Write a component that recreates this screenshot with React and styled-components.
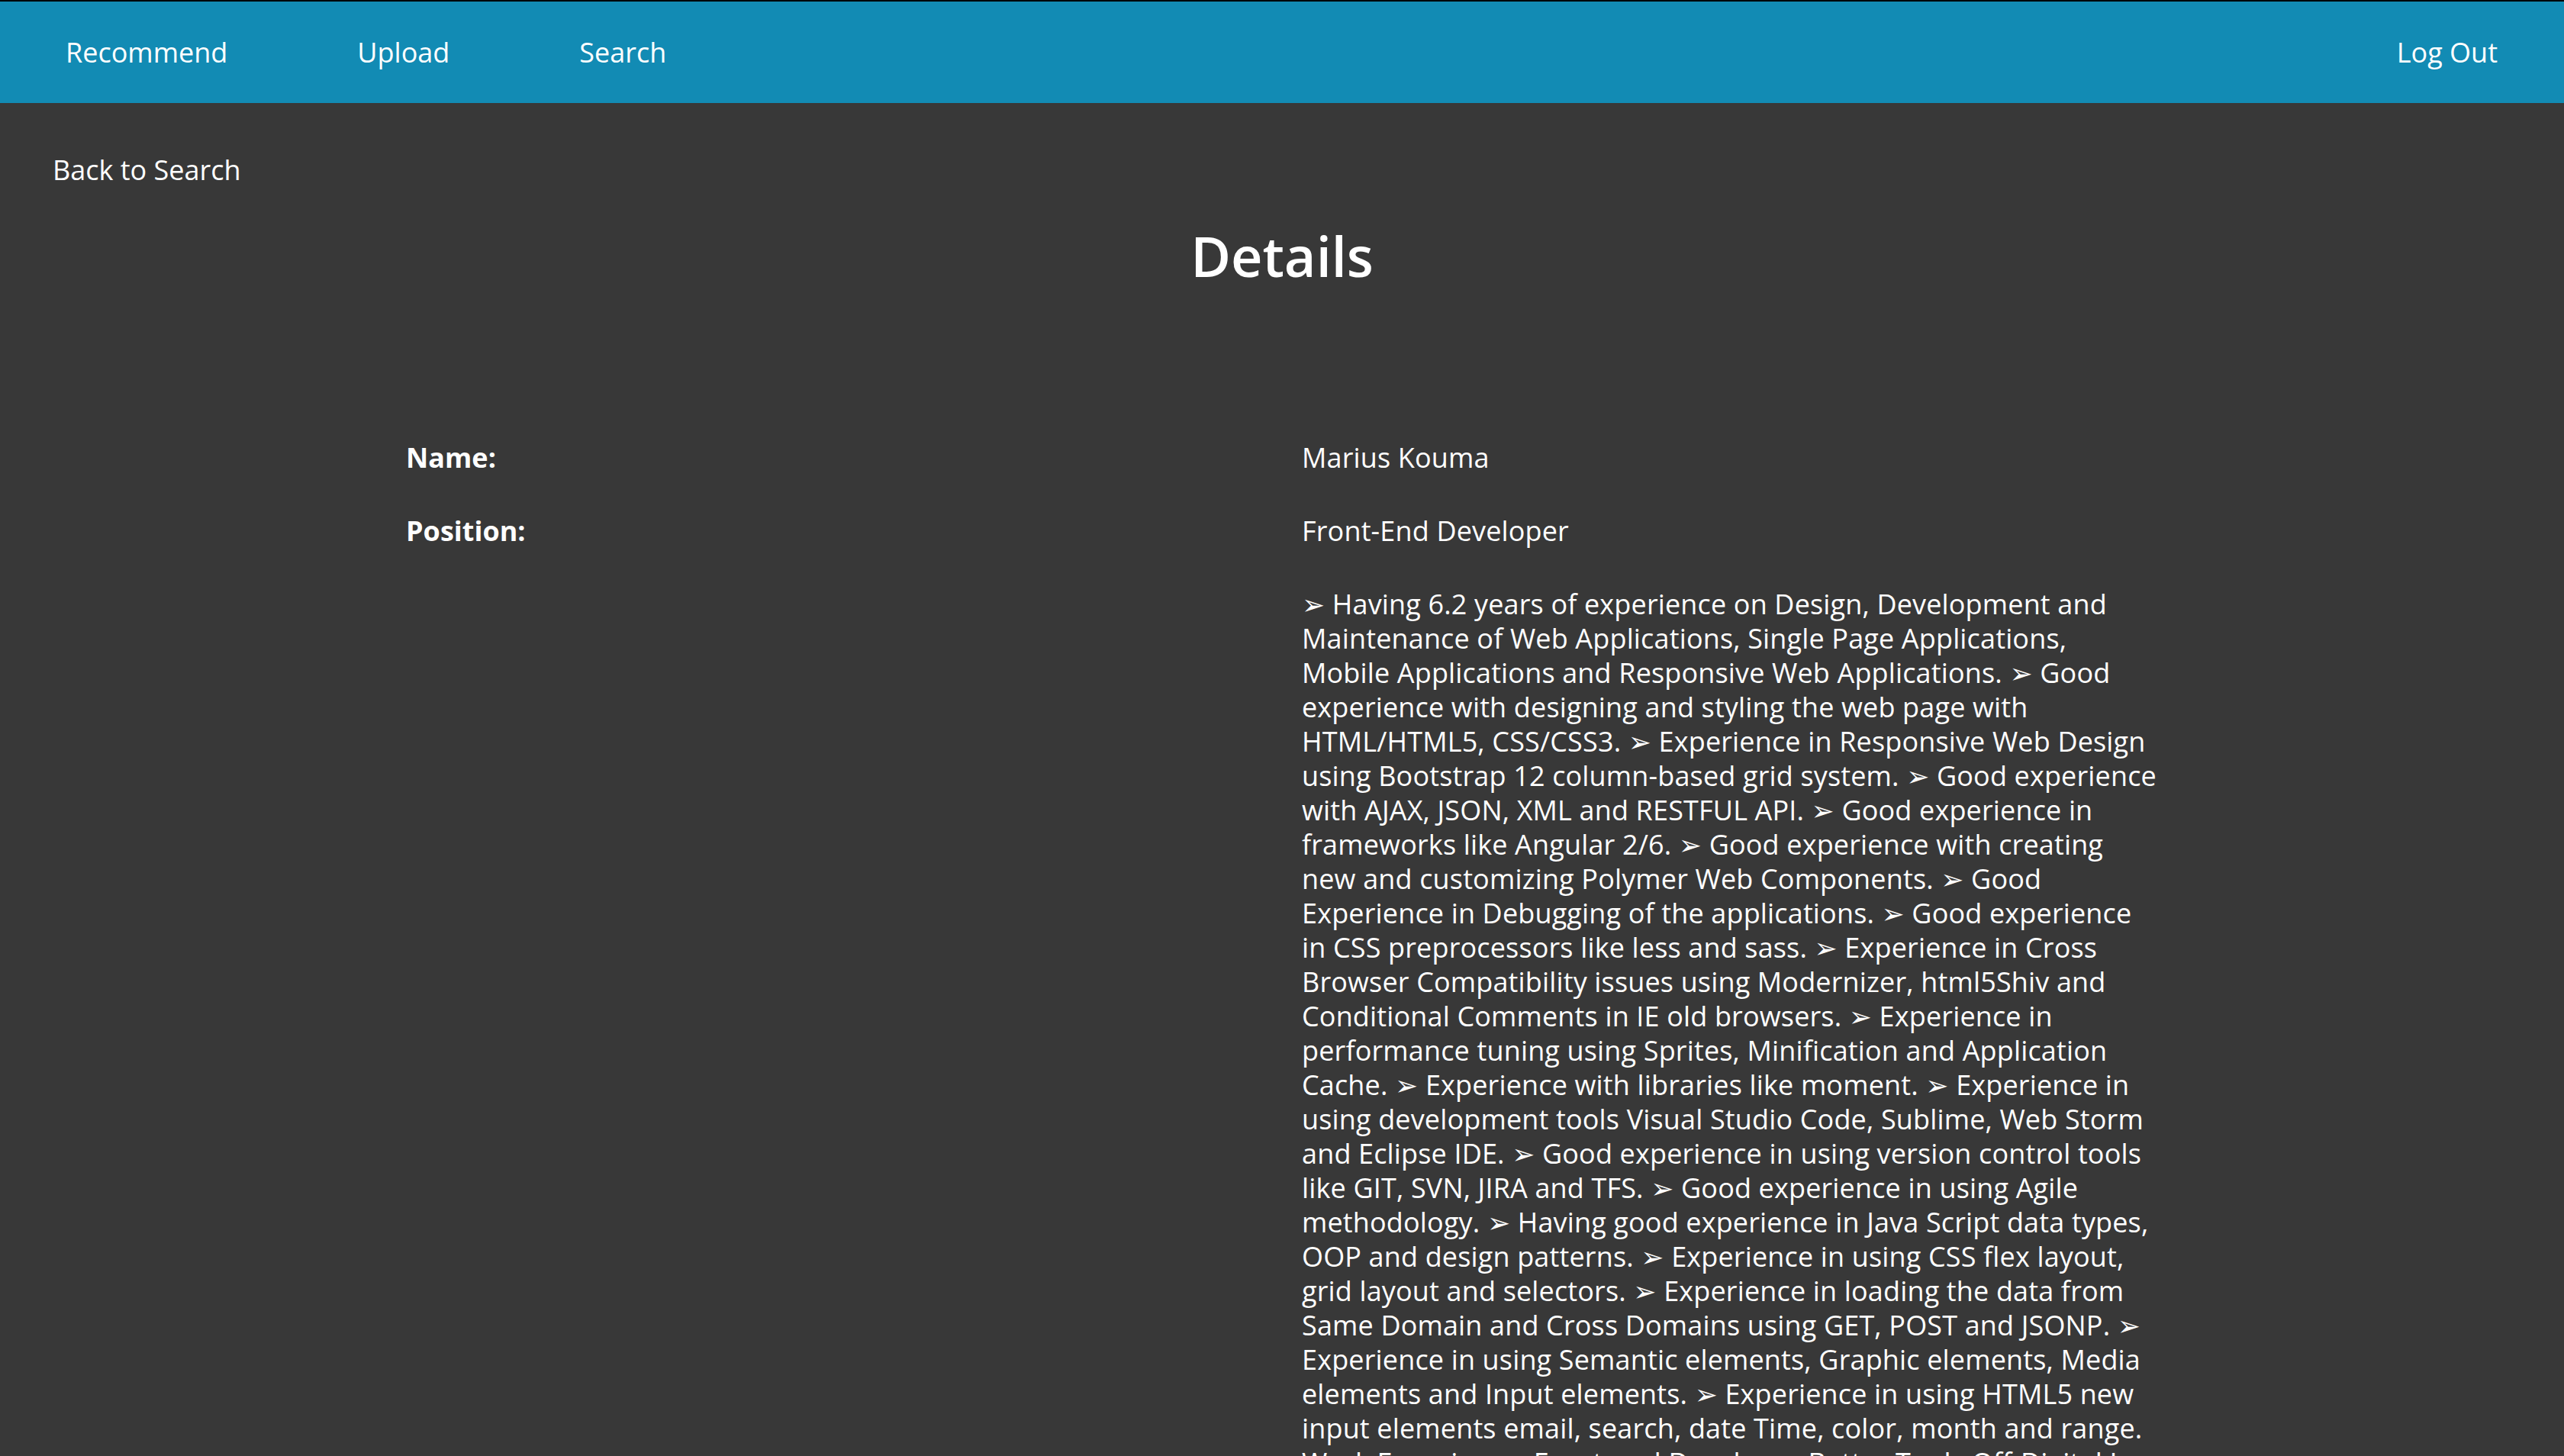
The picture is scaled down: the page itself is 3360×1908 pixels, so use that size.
import React from 'react';
import styled, { createGlobalStyle } from 'styled-components';

const GlobalStyle = createGlobalStyle`
  html, body {
    margin: 0;
    padding: 0;
    background: #383838;
  }
  body {
    font-family: "Open Sans", "Noto Sans", "DejaVu Sans", sans-serif;
    color: #ffffff;
  }
  * {
    box-sizing: border-box;
  }
`;

const candidate = {
  name: 'Marius Kouma',
  position: 'Front-End Developer',
  summary:
    '➢ Having 6.2 years of experience on Design, Development and Maintenance of Web Applications, Single Page Applications, Mobile Applications and Responsive Web Applications. ➢ Good experience with designing and styling the web page with HTML/HTML5, CSS/CSS3. ➢ Experience in Responsive Web Design using Bootstrap 12 column-based grid system. ➢ Good experience with AJAX, JSON, XML and RESTFUL API. ➢ Good experience in frameworks like Angular 2/6. ➢ Good experience with creating new and customizing Polymer Web Components. ➢ Good Experience in Debugging of the applications. ➢ Good experience in CSS preprocessors like less and sass. ➢ Experience in Cross Browser Compatibility issues using Modernizer, html5Shiv and Conditional Comments in IE old browsers. ➢ Experience in performance tuning using Sprites, Minification and Application Cache. ➢ Experience with libraries like moment. ➢ Experience in using development tools Visual Studio Code, Sublime, Web Storm and Eclipse IDE. ➢ Good experience in using version control tools like GIT, SVN, JIRA and TFS. ➢ Good experience in using Agile methodology. ➢ Having good experience in Java Script data types, OOP and design patterns. ➢ Experience in using CSS flex layout, grid layout and selectors. ➢ Experience in loading the data from Same Domain and Cross Domains using GET, POST and JSONP. ➢ Experience in using Semantic elements, Graphic elements, Media elements and Input elements. ➢ Experience in using HTML5 new input elements email, search, date Time, color, month and range. Work Experience: Front-end Developer Better Tools Off-Digital Inc. Responsibilities: Developed user interfaces with HTML5, CSS3 and JavaScript.',
};

const Page = styled.div`
  min-height: 100vh;
  border-top: 2px solid #000;
  background: #383838;
`;

const NavBar = styled.nav`
  height: 133px;
  background: #128bb4;
  display: flex;
  align-items: center;
`;

const NavLink = styled.a`
  padding: 0 85px;
  font-size: 36px;
  line-height: 45px;
  color: #fff;
  text-decoration: none;
  margin-left: ${(p) => (p.$push ? 'auto' : '0')};
  &:first-child {
    padding-left: 86px;
  }
  &:last-child {
    padding-right: 87px;
  }
`;

const BackLink = styled.a`
  display: inline-block;
  margin: 65px 0 0 69px;
  font-size: 36px;
  line-height: 45px;
  color: #fff;
  text-decoration: none;
`;

const Title = styled.h1`
  margin: 45px 0 0;
  text-align: center;
  font-size: 72px;
  line-height: 90px;
  font-weight: 600;
`;

const DetailGrid = styled.dl`
  width: 70%;
  margin: 197px auto 0;
  display: grid;
  grid-template-columns: 1fr 1fr;
  row-gap: 51px;
  padding-bottom: 80px;
`;

const Label = styled.dt`
  padding: 0 28px;
  font-size: 36px;
  line-height: 45px;
  font-weight: 700;
`;

const Value = styled.dd`
  margin: 0;
  padding: 0 30px 0 26px;
  font-size: 36px;
  line-height: 45px;
  letter-spacing: 0.15px;
`;

const App = () => {
  return (
    <Page>
      <GlobalStyle />
      <NavBar>
        <NavLink href="#">Recommend</NavLink>
        <NavLink href="#">Upload</NavLink>
        <NavLink href="#">Search</NavLink>
        <NavLink href="#" $push>Log Out</NavLink>
      </NavBar>
      <BackLink href="#">Back to Search</BackLink>
      <Title>Details</Title>
      <DetailGrid>
        <Label>Name:</Label>
        <Value>{candidate.name}</Value>
        <Label>Position:</Label>
        <Value>{candidate.position}</Value>
        <Label />
        <Value>{candidate.summary}</Value>
      </DetailGrid>
    </Page>
  );
};

export default App;
